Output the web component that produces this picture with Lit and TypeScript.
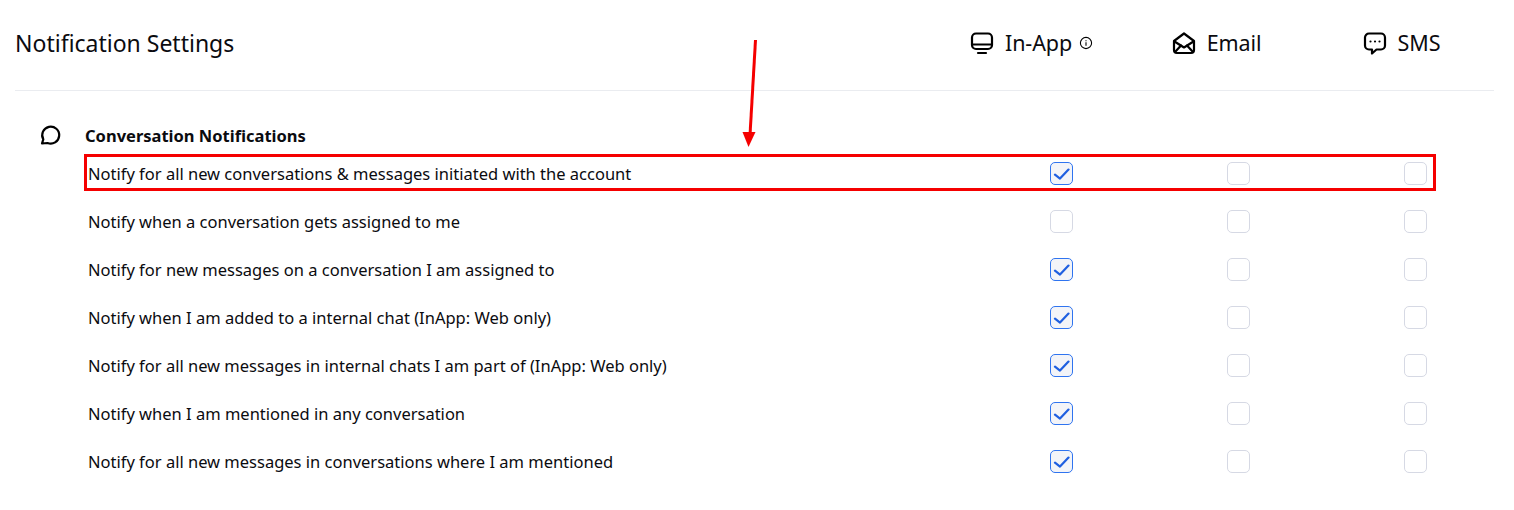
import { LitElement, html, css } from "lit";
import { customElement } from "lit/decorators.js";

const rows = [
  { label: "Notify for all new conversations & messages initiated with the account", inApp: true },
  { label: "Notify when a conversation gets assigned to me", inApp: false },
  { label: "Notify for new messages on a conversation I am assigned to", inApp: true },
  { label: "Notify when I am added to a internal chat (InApp: Web only)", inApp: true },
  { label: "Notify for all new messages in internal chats I am part of (InApp: Web only)", inApp: true },
  { label: "Notify when I am mentioned in any conversation", inApp: true },
  { label: "Notify for all new messages in conversations where I am mentioned", inApp: true },
];

@customElement("app-root")
export class AppRoot extends LitElement {
  static styles = css`
    :host {
      display: block;
      position: relative;
      width: 1514px;
      height: 510px;
      overflow: hidden;
      background: #fff;
      color: #0b0b0f;
      font-family: "Noto Sans", "Open Sans", sans-serif;
    }
    .head {
      display: flex;
      align-items: center;
      height: 86px;
      padding-bottom: 4px;
      margin: 0 20px 0 15px;
      border-bottom: 1px solid #eaecf0;
    }
    .title {
      flex: 1;
      font-size: 23px;
    }
    .channel {
      width: 185px;
      display: flex;
      align-items: center;
      justify-content: center;
      font-size: 21.5px;
      letter-spacing: -0.1px;
    }
    .channel .name {
      margin-bottom: 2px;
    }
    .channel svg.main {
      width: 24px;
      height: 24px;
      margin-right: 11px;
      flex: none;
    }
    .channel svg.info {
      width: 14px;
      height: 14px;
      margin-left: 7px;
    }
    .section-head {
      display: flex;
      align-items: center;
      height: 28px;
      margin-top: 30px;
      padding-left: 39px;
    }
    .section-head svg {
      width: 24px;
      height: 24px;
      margin-right: 22px;
    }
    .section-head b {
      font-size: 16.5px;
      font-weight: 700;
    }
    .row {
      display: grid;
      grid-template-columns: 1fr 177px 177px 177px;
      align-items: center;
      height: 48px;
      padding: 0 10px 0 88px;
      font-size: 16.5px;
    }
    .box {
      justify-self: center;
      box-sizing: border-box;
      width: 23px;
      height: 23px;
      border: 1px solid #d6d9e4;
      border-radius: 5px;
      display: flex;
      align-items: center;
      justify-content: center;
    }
    .box.on {
      border-color: #2f74f0;
      background: #f3f4f8;
    }
    .box svg {
      width: 17px;
      height: 17px;
    }
    .mark {
      position: absolute;
      left: 84px;
      top: 154px;
      width: 1352px;
      height: 37px;
      box-sizing: border-box;
      border: 3px solid #f50000;
    }
    .arrow {
      position: absolute;
      left: 735px;
      top: 35px;
      width: 30px;
      height: 115px;
    }
  `;

  box(on: boolean) {
    return html`<span class="box ${on ? "on" : ""}">
      ${on
        ? html`<svg viewBox="0 0 17 17" fill="none" stroke="#1f5fe0" stroke-width="2.2" stroke-linecap="round" stroke-linejoin="round">
            <path d="M2 9.6l5 4 8.5-9" />
          </svg>`
        : ""}
    </span>`;
  }

  render() {
    return html`
      <div class="head">
        <div class="title">Notification Settings</div>
        <div class="channel">
          <svg class="main" viewBox="0 0 24 24" fill="none" stroke="#000" stroke-width="2.2" stroke-linejoin="round" stroke-linecap="round">
            <rect x="2" y="2.5" width="20" height="15.5" rx="4" />
            <path d="M2.5 13.5h19" />
            <path d="M8 22h8" />
          </svg>
          <span class="name">In-App</span>
          <svg class="info" viewBox="0 0 14 14" fill="none" stroke="#000" stroke-width="1.1">
            <circle cx="7" cy="7" r="5.6" />
            <path d="M7 6.2v3.6M7 4.2v1" />
          </svg>
        </div>
        <div class="channel">
          <svg class="main" viewBox="0 0 24 24" fill="none" stroke="#000" stroke-width="2.2" stroke-linejoin="round" stroke-linecap="round">
            <path d="M2 10l10-7.500L22 10v9a3 3 0 0 1-3 3H5a3 3 0 0 1-3-3z" />
            <path d="M2.500 10.500l9.500 6 9.500-6" />
            <path d="M3 21l6-6.500M21 21l-6-6.500" />
          </svg>
          <span class="name">Email</span>
        </div>
        <div class="channel">
          <svg class="main" viewBox="0 0 24 24" fill="none" stroke="#000" stroke-width="2.2" stroke-linejoin="round" stroke-linecap="round">
            <path d="M6 2.500h12a4 4 0 0 1 4 4v8a4 4 0 0 1-4 4h-4.500L9 22.500v-4H6a4 4 0 0 1-4-4v-8a4 4 0 0 1 4-4z" />
            <path d="M7.500 10.500h.01M12 10.500h.01M16.500 10.500h.01" />
          </svg>
          <span class="name">SMS</span>
        </div>
      </div>
      <div class="section-head">
        <svg viewBox="0 0 24 24" fill="none" stroke="#000" stroke-width="2.2" stroke-linejoin="round" stroke-linecap="round">
          <path d="M3 20.500l1.300-4.200A8.500 8.500 0 1 1 8.500 20z" />
        </svg>
        <b>Conversation Notifications</b>
      </div>
      <div>
        ${rows.map(
          (r) => html`<div class="row">
            <span>${r.label}</span>
            ${this.box(r.inApp)} ${this.box(false)} ${this.box(false)}
          </div>`
        )}
      </div>
      <div class="mark"></div>
      <svg class="arrow" viewBox="0 0 30 115">
        <path d="M20.500 5L15 100" stroke="#f50000" stroke-width="3" fill="none" />
        <path d="M7.500 97h13l-7 15z" fill="#f50000" />
      </svg>
    `;
  }
}
